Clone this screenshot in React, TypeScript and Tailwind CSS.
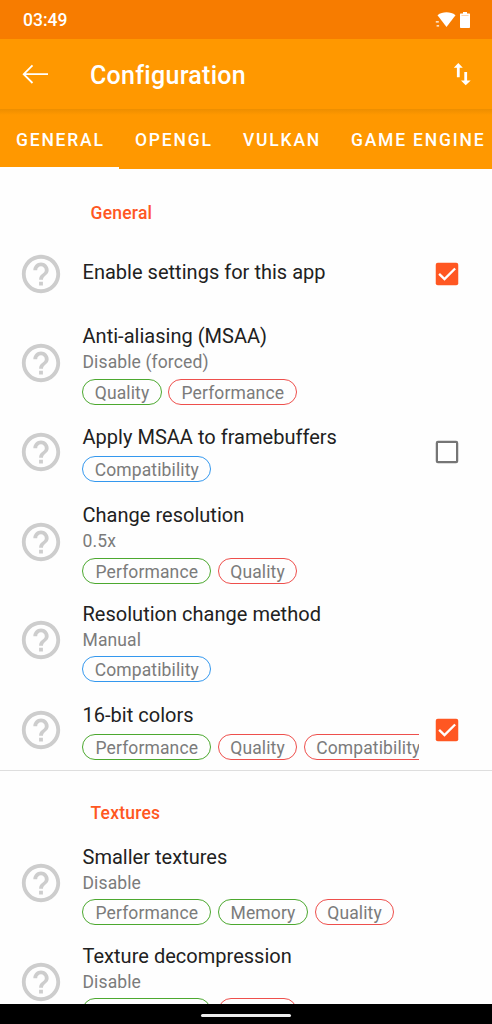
import React from "react";

type TagName = "Quality" | "Performance" | "Compatibility" | "Memory";
type Tag = { name: TagName; tone: "good" | "bad" | "info" };
type Setting = { title: string; value?: string; tags: Tag[]; checked?: boolean };

const good = (name: TagName): Tag => ({ name, tone: "good" });
const bad = (name: TagName): Tag => ({ name, tone: "bad" });
const info = (name: TagName): Tag => ({ name, tone: "info" });

const general: Setting[] = [
  { title: "Enable settings for this app", tags: [], checked: true },
  { title: "Anti-aliasing (MSAA)", value: "Disable (forced)", tags: [good("Quality"), bad("Performance")] },
  { title: "Apply MSAA to framebuffers", tags: [info("Compatibility")], checked: false },
  { title: "Change resolution", value: "0.5x", tags: [good("Performance"), bad("Quality")] },
  { title: "Resolution change method", value: "Manual", tags: [info("Compatibility")] },
  { title: "16-bit colors", tags: [good("Performance"), bad("Quality"), bad("Compatibility")], checked: true },
];

const textures: Setting[] = [
  { title: "Smaller textures", value: "Disable", tags: [good("Performance"), good("Memory"), bad("Quality")] },
  { title: "Texture decompression", value: "Disable", tags: [good("Performance"), bad("Quality")] },
];

const toneClass = {
  good: "border-[#4ca82f]",
  bad: "border-[#ee4f4c]",
  info: "border-[#3498ee]",
};

const tagWidth: Record<TagName, string> = {
  Quality: "w-[79.5px]",
  Performance: "w-[129px]",
  Compatibility: "w-[129px]",
  Memory: "w-[90.5px]",
};

function HelpIcon() {
  return (
    <svg viewBox="0 0 24 24" className="ml-[18px] h-[46px] w-[46px] shrink-0" fill="#cdcdcd">
      <path d="M11 18h2v-2h-2v2zm1-16C6.48 2 2 6.48 2 12s4.480 10 10 10 10-4.480 10-10S17.520 2 12 2zm0 18c-4.410 0-8-3.590-8-8s3.590-8 8-8 8 3.590 8 8-3.590 8-8 8zm0-14c-2.210 0-4 1.790-4 4h2c0-1.100.9-2 2-2s2 .9 2 2c0 2-3 1.750-3 5h2c0-2.250 3-2.500 3-5 0-2.210-1.790-4-4-4z" />
    </svg>
  );
}

function Checkbox({ checked }: { checked: boolean }) {
  return (
    <svg viewBox="0 0 24 24" className="ml-[13px] h-[30px] w-[30px] shrink-0">
      {checked ? (
        <>
          <rect x="3" y="3" width="18" height="18" rx="1.6" fill="#ff5722" />
          <path d="M5.700 11.900 10 16.100 18.500 7.600" fill="none" stroke="#fff" strokeWidth="1.9" />
        </>
      ) : (
        <rect x="3.900" y="3.900" width="16.200" height="16.200" rx="0.8" fill="none" stroke="#757575" strokeWidth="1.8" />
      )}
    </svg>
  );
}

function Row({ item }: { item: Setting }) {
  return (
    <div className={`flex shrink-0 items-center ${item.value ? "h-[98.7px]" : "h-[80px]"}`}>
      <HelpIcon />
      <div className={`ml-[18px] flex w-[337px] flex-col overflow-hidden pt-[2.5px] ${item.tags.length ? "" : "-mt-[5px]"}`}>
        <div className="h-[26px] whitespace-nowrap pl-[0.5px] text-[20px] leading-[26px] tracking-[0.02px] text-[#212121]">{item.title}</div>
        {item.value && <div className="h-[23.5px] pl-[0.5px] text-[17.5px] leading-[26px] tracking-[0.12px] text-[#7b7b7b]">{item.value}</div>}
        {item.tags.length > 0 && (
          <div className="mt-[6px] flex gap-[6.5px] pl-[0.3px]">
            {item.tags.map((tag) => (
              <div
                key={tag.name}
                className={`flex h-[26px] shrink-0 items-center justify-center rounded-full border-[1.25px] pt-[2px] text-[17.5px] leading-[24px] tracking-[0.12px] text-[#7b7b7b] ${tagWidth[tag.name]} ${toneClass[tag.tone]}`}
              >
                {tag.name}
              </div>
            ))}
          </div>
        )}
      </div>
      {item.checked !== undefined && <Checkbox checked={item.checked} />}
    </div>
  );
}

export default function App() {
  return (
    <div className="flex h-[1024px] w-[492px] flex-col overflow-hidden bg-[#fefefe] font-['Roboto',sans-serif]">
      <div className="flex h-[39px] shrink-0 items-center bg-[#f77c00] pl-[23px] text-white">
        <div className="pt-[2px] text-[17.5px] font-medium">03:49</div>
        <svg className="ml-auto mr-[21px] h-[18px] w-[36px]" viewBox="0 0 36 18" fill="#fff">
          <path d="M2.500 4.200C7.500.4 15.500.4 20.500 4.200L11.500 16z" />
          <path d="M.8 10.300h3v1.300h-3zM1.600 14.300h2.500v1.200H1.600z" />
          <path d="M28 1h4v1.500h2.500q.5 0 .5.700v13q0 .8-.8.800h-8.400q-.8 0-.8-.8v-13q0-.7.500-.7H28z" />
          <path d="M26.500 4.200h7v.6h-7z" fill="#f77c00" opacity=".55" />
        </svg>
      </div>
      <div className="flex h-[70px] shrink-0 items-center bg-[#ff9800] text-white">
        <svg className="ml-[22px] h-[20px] w-[28px]" viewBox="0 0 28 20" fill="none" stroke="#fff" strokeWidth="1.8">
          <path d="M26 10.200H2M10.500 1.400 1.700 10.200l8.800 8.800" />
        </svg>
        <h1 className="ml-[40px] pt-[4px] text-[25px] font-medium leading-[30px] tracking-[0.28px]">Configuration</h1>
        <svg className="ml-auto mr-[20px] h-[24px] w-[20px]" viewBox="0 0 20 24" fill="#fff">
          <path d="M6.300 1 10.800 5.800H7.700v9.400H4.900V5.800H1.800zM12.300 10h2.800v8.500h3.600L13.700 23.300 9 18.500h3.300z" />
        </svg>
      </div>
      <div className="flex h-[60px] shrink-0 bg-linear-to-b from-[#ed8e00] from-[0px] via-[#f69300] via-[3px] to-[#ff9800] to-[6px] text-[17.5px] font-medium tracking-[1.800px] text-white">
        <div className="flex w-[119px] shrink-0 items-center border-b-[2px] border-white pl-[16px] pt-[5px]">GENERAL</div>
        <div className="flex w-[108px] shrink-0 items-center pl-[16px] pt-[3px]">OPENGL</div>
        <div className="flex w-[108px] shrink-0 items-center pl-[16px] pt-[3px]">VULKAN</div>
        <div className="flex shrink-0 items-center whitespace-nowrap pl-[16px] pt-[3px]">GAME ENGINE</div>
      </div>
      <main className="flex h-[835px] shrink-0 flex-col overflow-hidden">
        <h2 className="h-[64.500px] shrink-0 pl-[90.5px] pt-[31.5px] text-[17.5px] font-medium leading-[24px] tracking-[0.22px] text-[#ff5722]">General</h2>
        {general.map((item) => (
          <Row key={item.title} item={item} />
        ))}
        <div className="h-[1.5px] shrink-0 bg-[#dedede]" />
        <h2 className="h-[63px] shrink-0 pl-[90.5px] pt-[30px] text-[17.5px] font-medium leading-[24px] tracking-[0.22px] text-[#ff5722]">Textures</h2>
        {textures.map((item) => (
          <Row key={item.title} item={item} />
        ))}
      </main>
      <div className="flex h-[20px] shrink-0 justify-center bg-black pt-[9.500px]">
        <div className="h-[3px] w-[90px] rounded-full bg-[#eeeeee]" />
      </div>
    </div>
  );
}
